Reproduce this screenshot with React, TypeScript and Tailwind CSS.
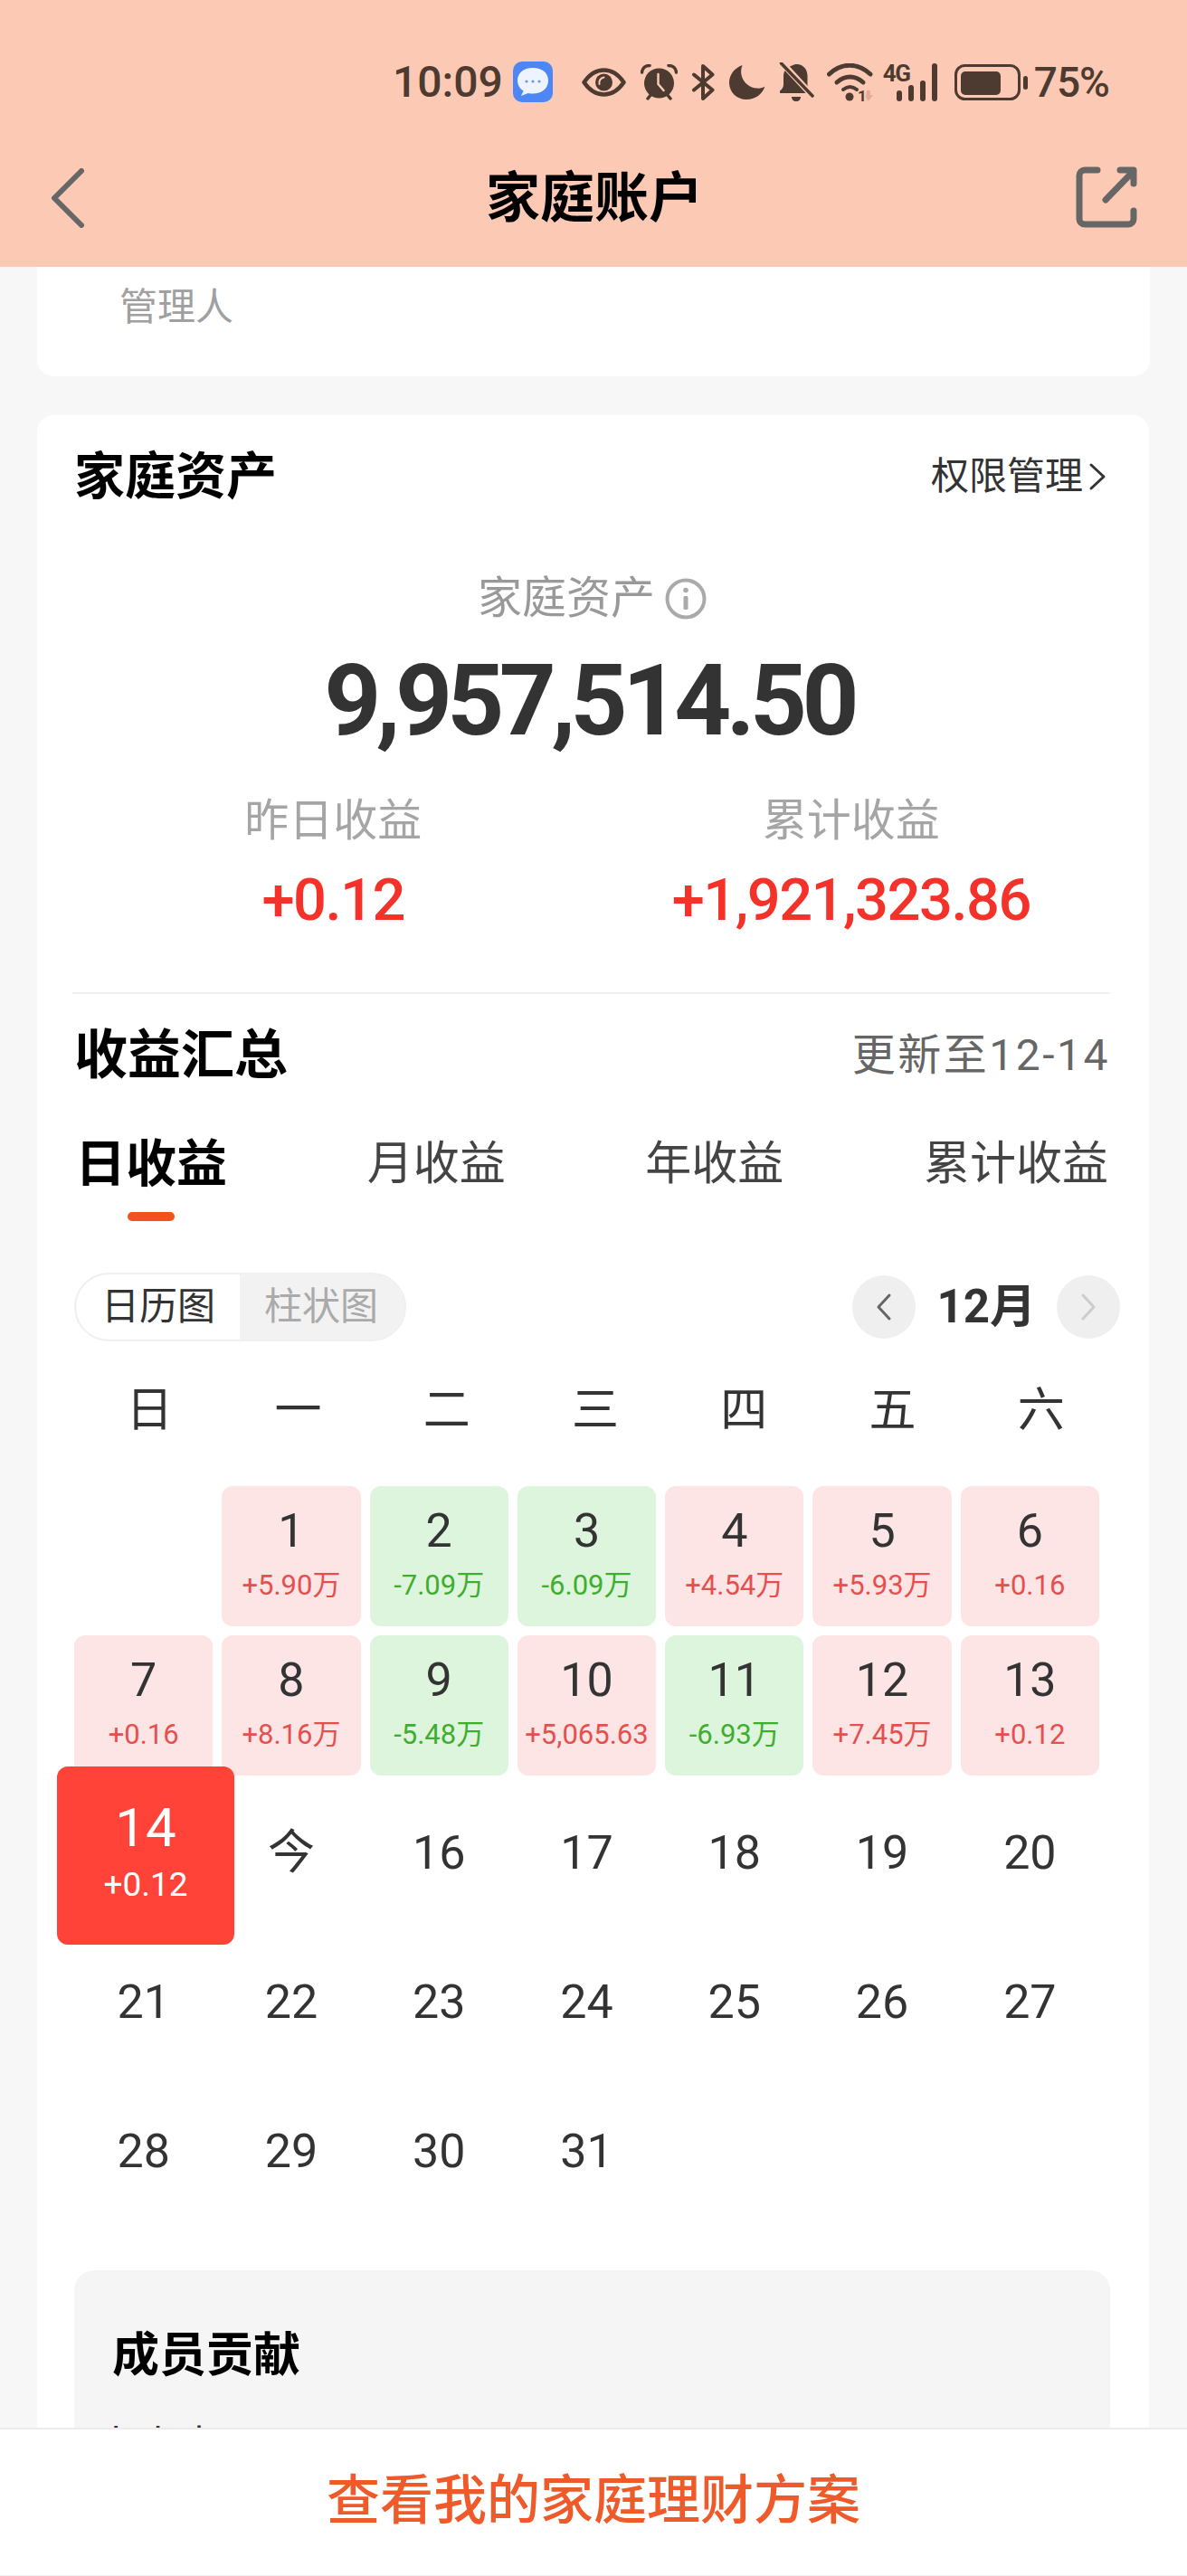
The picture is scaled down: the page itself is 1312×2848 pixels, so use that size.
import { Fragment } from "react";

const WEEK = ["日", "一", "二", "三", "四", "五", "六"];

type Day = { d: string; v?: string; up?: boolean };

const DAYS: (Day | null)[] = [
  null,
  { d: "1", v: "+5.90万", up: true },
  { d: "2", v: "-7.09万", up: false },
  { d: "3", v: "-6.09万", up: false },
  { d: "4", v: "+4.54万", up: true },
  { d: "5", v: "+5.93万", up: true },
  { d: "6", v: "+0.16", up: true },
  { d: "7", v: "+0.16", up: true },
  { d: "8", v: "+8.16万", up: true },
  { d: "9", v: "-5.48万", up: false },
  { d: "10", v: "+5,065.63", up: true },
  { d: "11", v: "-6.93万", up: false },
  { d: "12", v: "+7.45万", up: true },
  { d: "13", v: "+0.12", up: true },
  { d: "14" },
  { d: "今" },
  { d: "16" },
  { d: "17" },
  { d: "18" },
  { d: "19" },
  { d: "20" },
  { d: "21" },
  { d: "22" },
  { d: "23" },
  { d: "24" },
  { d: "25" },
  { d: "26" },
  { d: "27" },
  { d: "28" },
  { d: "29" },
  { d: "30" },
  { d: "31" },
];

const INK = "#4d3a30";

function StatusBar() {
  return (
    <div className="flex h-[45px] items-center justify-end pr-[86px] text-[#4d3a30]">
      <span className="text-[48px] font-medium leading-[56px]">10:09</span>
      {/* message app */}
      <svg width="44" height="45" viewBox="0 0 44 45" className="ml-[11px]">
        <rect width="44" height="45" rx="10" fill="#4f86f5" />
        <path
          d="M22 7C11.5 7 5 13 5 21c0 5 2.6 9.2 6.6 11.6L9 38l7.6-3c1.7.4 3.5.6 5.4.6 10 0 17-6 17-14.6S32 7 22 7Z"
          fill="#eef4ff"
        />
        <circle cx="15" cy="22" r="1.6" fill="#6f97dc" />
        <circle cx="22" cy="22" r="1.6" fill="#6f97dc" />
        <circle cx="29" cy="22" r="1.6" fill="#6f97dc" />
      </svg>
      {/* eye */}
      <svg width="49" height="32" viewBox="0 0 49 32" className="ml-[32px]">
        <path
          d="M2.500 16C9 6.500 16.500 2.500 24.500 2.500S40 6.500 46.500 16C40 25.500 32.500 29.500 24.500 29.500S9 25.500 2.500 16Z"
          fill="none"
          stroke={INK}
          strokeWidth="4.500"
          strokeLinejoin="round"
        />
        <circle cx="24.500" cy="16" r="9.500" fill={INK} />
        <path d="M19.500 18a6 6 0 0 1 5-7.500" fill="none" stroke="#fccab4" strokeWidth="2" strokeLinecap="round" />
      </svg>
      {/* alarm */}
      <svg width="41" height="40" viewBox="0 0 41 40" className="ml-[16px]">
        <circle cx="20.500" cy="21" r="16.500" fill={INK} />
        <path d="M1.500 9C2 4 5.500 1.500 10 1.500M39.500 9C39 4 35.500 1.500 31 1.500" fill="none" stroke={INK} strokeWidth="3.500" strokeLinecap="round" />
        <path d="M8 38l4-5M33 38l-4-5" fill="none" stroke={INK} strokeWidth="3.500" strokeLinecap="round" />
        <path d="M19.500 11v11l6 7" fill="none" stroke="#fccab4" strokeWidth="2.500" strokeLinecap="round" strokeLinejoin="round" />
      </svg>
      {/* bluetooth */}
      <svg width="27" height="40" viewBox="0 0 27 40" className="ml-[15px]">
        <path
          d="M3 11.500L23.500 28.500L13 38V2L23.500 11.500L3 28.500"
          fill="none"
          stroke={INK}
          strokeWidth="4"
          strokeLinejoin="round"
          strokeLinecap="round"
        />
      </svg>
      {/* moon */}
      <svg width="40" height="38" viewBox="0 0 40 38" className="ml-[15px]">
        <path
          d="M14.500 0C5 3.500 0 11.500 0 19.500 0 30 8.500 38 19 38c9.500 0 17.500-5.500 20.500-14.500-2.500 1.800-6 2.500-9.500 2C19 24.500 9.500 13 14.500 0Z"
          fill={INK}
        />
      </svg>
      {/* bell off */}
      <svg width="39" height="43" viewBox="0 0 39 43" className="ml-[15px]">
        <path
          d="M20 2c6.500 0 11.500 5.500 11.500 13v10c0 3 2 5 4 7v2H1v-2.500c2.500-2 4-4 4-7V15C5 7.500 11 4.500 15.500 3 16 2.500 18 2 20 2Z"
          fill={INK}
        />
        <path d="M14 38h10c0 3-2 5-5 5s-5-2-5-5Z" fill={INK} />
        <path d="M2 -1L38 38" stroke="#fccab4" strokeWidth="7" />
        <path d="M2.500 1L37 37" stroke={INK} strokeWidth="3.500" strokeLinecap="round" />
      </svg>
      {/* wifi */}
      <svg width="52" height="42" viewBox="0 0 52 42" className="ml-[14px]">
        <path d="M2.500 12C16 -1 34 -1 48 12" fill="none" stroke={INK} strokeWidth="5" strokeLinecap="round" />
        <path d="M11 21c9-8 20-8 29 0" fill="none" stroke={INK} strokeWidth="5" strokeLinecap="round" />
        <path d="M18 29c5-4 10-4 15 0" fill="none" stroke={INK} strokeWidth="4" strokeLinecap="round" />
        <circle cx="25" cy="37" r="4.500" fill={INK} />
        <text x="34" y="42" fontSize="17" fontWeight="700" fill={INK} fontFamily="Roboto">
          1
        </text>
        <path d="M44 30h4v5h3l-5 7-3-4Z" fill="#e5ab93" />
      </svg>
      {/* 4G + signal */}
      <div className="relative ml-[10px] h-[42px] w-[62px]">
        <span className="absolute left-0 top-0 text-[26px] font-bold leading-[22px] tracking-[-1.500px]">4G</span>
        <svg width="48" height="42" viewBox="0 0 48 42" className="absolute right-0 top-0">
          <rect x="1" y="30" width="6" height="12" rx="3" fill={INK} />
          <rect x="14" y="24" width="6" height="18" rx="3" fill={INK} />
          <rect x="27" y="19" width="6" height="23" rx="3" fill={INK} />
          <rect x="40" y="0" width="6" height="42" rx="3" fill={INK} />
        </svg>
      </div>
      {/* battery */}
      <svg width="81" height="40" viewBox="0 0 81 40" className="ml-[17px]">
        <rect x="1.500" y="1.500" width="70" height="37" rx="10" fill="none" stroke={INK} strokeWidth="3" />
        <rect x="7" y="8" width="44" height="26" rx="5" fill={INK} />
        <rect x="76" y="13" width="5" height="15" rx="2.500" fill={INK} />
      </svg>
      <span className="ml-[7px] text-[46px] font-medium leading-[56px] tracking-[-1px]">75%</span>
    </div>
  );
}

function Cell({ day }: { day: Day | null }) {
  if (!day) return <div />;
  if (day.d === "14") {
    return (
      <div className="relative">
        <div className="absolute -left-[19px] -top-[20px] z-10 flex h-[197px] w-[196px] flex-col items-center rounded-[12px] bg-[#ff4338] pt-[33px] text-white">
          <span className="text-[60px] leading-[70px]">14</span>
          <span className="mt-[6px] text-[37px] leading-[44px]">+0.12</span>
        </div>
      </div>
    );
  }
  if (!day.v) {
    return <div className="flex items-center justify-center pb-[4px] text-[52px] leading-[60px] text-[#333]">{day.d}</div>;
  }
  return (
    <div className={`flex flex-col items-center rounded-[12px] pt-[20px] ${day.up ? "bg-[#fde5e6]" : "bg-[#def5dd]"}`}>
      <span className="text-[52px] leading-[60px] text-[#333]">{day.d}</span>
      <span className={`mt-[10px] whitespace-nowrap text-[31px] leading-[40px] ${day.up ? "text-[#e5504f]" : "text-[#3fae2e]"}`}>
        {day.v}
      </span>
    </div>
  );
}

export default function App() {
  return (
    <div className="relative h-[2848px] w-[1312px] overflow-hidden bg-[#f7f7f7] [font-family:Roboto,'Noto_Sans_CJK_SC',sans-serif]">
      {/* top bar */}
      <div className="h-[295px] bg-[#fccab4] pt-[68px]">
        <StatusBar />
        <div className="mt-[71px] grid h-[66px] grid-cols-[1fr_auto_1fr] items-center pl-[55px] pr-[53px]">
          <svg width="38" height="66" viewBox="0 0 38 66">
            <path d="M35 3L5 33L35 63" fill="none" stroke="#666" strokeWidth="6" strokeLinecap="round" strokeLinejoin="round" />
          </svg>
          <h1 className="pt-[2px] text-[60px] font-bold leading-[66px] text-black">家庭账户</h1>
          <svg width="70" height="70" viewBox="0 0 70 70" className="justify-self-end">
            <path
              d="M24 4H10a6 6 0 0 0-6 6V58a6 6 0 0 0 6 6H58a6 6 0 0 0 6-6V49"
              fill="none"
              stroke="#666"
              strokeWidth="7"
              strokeLinecap="round"
            />
            <path d="M33 37L64 5M49 4H64V19" fill="none" stroke="#666" strokeWidth="7" strokeLinecap="round" strokeLinejoin="round" />
          </svg>
        </div>
      </div>

      {/* manager card, scrolled under the bar */}
      <div className="mx-[41px] h-[121px] rounded-b-[18px] bg-white pl-[91px] pt-[23px]">
        <span className="text-[42px] leading-[44px] text-[#a0a0a0]">管理人</span>
      </div>

      {/* assets card */}
      <div className="ml-[41px] mt-[43px] w-[1229px] rounded-t-[18px] bg-white pb-[200px] pl-[41px] pr-[43px] pt-[38px]">
        <div className="flex h-[60px] items-center justify-between">
          <h2 className="text-[56px] font-bold leading-[60px] text-black">家庭资产</h2>
          <div className="flex items-center pr-[4px] text-[#333]">
            <span className="text-[42px] leading-[60px]">权限管理</span>
            <svg width="20" height="32" viewBox="0 0 20 32" className="ml-[6px]">
              <path d="M3 3L17 16L3 29" fill="none" stroke="#333" strokeWidth="3" strokeLinecap="round" strokeLinejoin="round" />
            </svg>
          </div>
        </div>

        <div className="mt-[75px] flex h-[60px] items-center justify-center text-[#999]">
          <span className="text-[49px] leading-[60px]">家庭资产</span>
          <svg width="46" height="46" viewBox="0 0 46 46" className="ml-[11px]">
            <circle cx="23" cy="23" r="20.500" fill="none" stroke="#aaa" strokeWidth="4" />
            <circle cx="23" cy="13.500" r="2.800" fill="#aaa" />
            <rect x="20.500" y="20" width="5" height="15" rx="1.500" fill="#aaa" />
          </svg>
        </div>
        <div className="mt-[23px] pr-[7px] text-center text-[110px] font-bold leading-[120px] tracking-[-5.700px] text-[#333]">9,957,514.50</div>

        <div className="mt-[43px] grid grid-cols-2 text-center">
          <div>
            <div className="text-[49px] leading-[60px] text-[#a5a5a5]">昨日收益</div>
            <div className="mt-[17px] text-[65px] font-medium leading-[80px] tracking-[-1.500px] text-[#f5322a]">+0.12</div>
          </div>
          <div>
            <div className="text-[49px] leading-[60px] text-[#a5a5a5]">累计收益</div>
            <div className="mt-[17px] text-[65px] font-medium leading-[80px] tracking-[-1.500px] text-[#f5322a]">+1,921,323.86</div>
          </div>
        </div>

        <div className="-ml-[2px] mt-[62px] h-[2px] bg-[#f0f0f0]" />

        <div className="mt-[33px] flex h-[70px] items-center justify-between">
          <h2 className="text-[59px] font-bold leading-[70px] text-black">收益汇总</h2>
          <span className="text-[48px] leading-[70px] tracking-[2.500px] text-[#666]">更新至12-14</span>
        </div>

        {/* period tabs */}
        <div className="ml-[1px] mr-[2px] mt-[50px] flex h-[98px] items-start justify-between text-[51px] leading-[70px] text-[#444]">
          <div className="flex flex-col items-center">
            <span className="text-[56px] font-bold text-black">日收益</span>
            <div className="mt-[18px] h-[10px] w-[52px] rounded-full bg-[#f4511e]" />
          </div>
          <span>月收益</span>
          <span>年收益</span>
          <span>累计收益</span>
        </div>

        <div className="mt-[57px] flex h-[76px] items-center justify-between">
          <div className="flex h-[76px] w-[367px] overflow-hidden rounded-full border-2 border-[#f0f0f0] bg-[#f2f2f2] text-[42px] leading-[72px]">
            <span className="w-[181px] rounded-l-full bg-white pl-[28px] text-[#333]">日历图</span>
            <span className="pl-[27px] text-[#aaa]">柱状图</span>
          </div>
          <div className="-mr-[11px] flex items-center">
            <div className="flex h-[70px] w-[70px] items-center justify-center rounded-full bg-[#efefef]">
              <svg width="18" height="32" viewBox="0 0 18 32">
                <path d="M15 3L3 16L15 29" fill="none" stroke="#666" strokeWidth="3" strokeLinecap="round" strokeLinejoin="round" />
              </svg>
            </div>
            <span className="mx-[23px] text-[51px] font-bold leading-[70px] text-[#333]">12月</span>
            <div className="flex h-[70px] w-[70px] items-center justify-center rounded-full bg-[#efefef]">
              <svg width="18" height="32" viewBox="0 0 18 32">
                <path d="M3 3L15 16L3 29" fill="none" stroke="#ccc" strokeWidth="3" strokeLinecap="round" strokeLinejoin="round" />
              </svg>
            </div>
          </div>
        </div>

        {/* calendar */}
        <div className="ml-[1px] mt-[47px] grid h-[60px] w-[1150px] grid-cols-7 text-center text-[52px] leading-[60px] text-[#333]">
          {WEEK.map((w) => (
            <Fragment key={w}>
              <span>{w}</span>
            </Fragment>
          ))}
        </div>
        <div className="mt-[53px] grid w-[1133px] auto-rows-[155px] grid-cols-7 gap-[10px]">
          {DAYS.map((day, i) => (
            <Cell key={i} day={day} />
          ))}
        </div>

        {/* member share, runs on under the footer */}
        <div className="mt-[52px] h-[400px] rounded-t-[22px] bg-[#f5f5f5] pl-[42px] pt-[65px]">
          <h3 className="text-[52px] font-bold leading-[60px] text-black">成员贡献</h3>
          <div className="-ml-[14px] mt-[39px] text-[44px] leading-[60px] text-[#333]">卜上本</div>
        </div>
      </div>

      {/* footer action */}
      <div className="absolute bottom-0 left-0 z-20 flex h-[164px] w-full items-center justify-center border-b border-t-2 border-b-[#f0f0f0] border-t-[#ececec] bg-white pb-[4px]">
        <span className="text-[59px] font-medium leading-[70px] text-[#ef5a2a]">查看我的家庭理财方案</span>
      </div>
    </div>
  );
}
